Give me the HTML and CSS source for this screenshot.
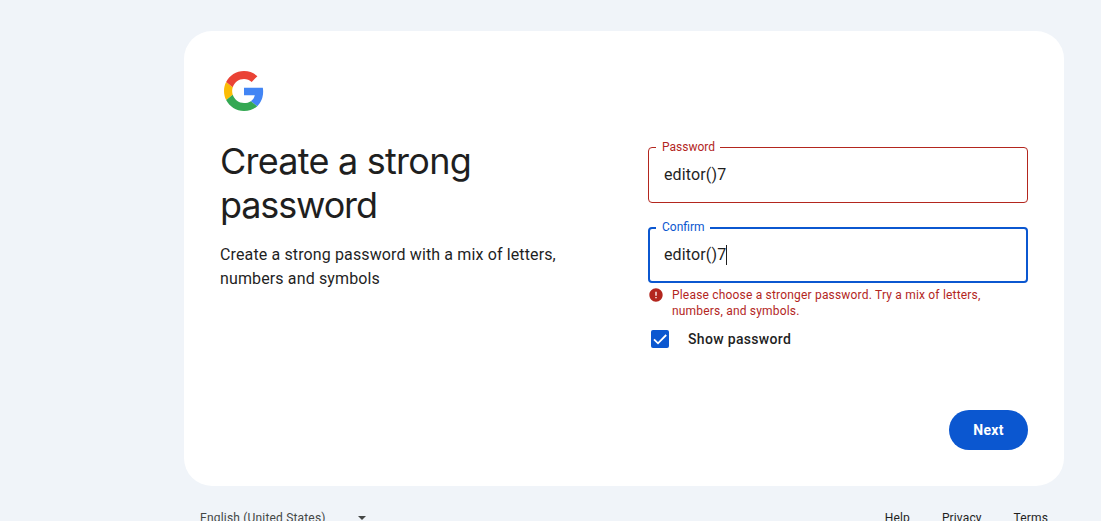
FILE: index.html
```html
<!DOCTYPE html>
<html lang="en">
<head>
<meta charset="utf-8">
<title>Create a strong password</title>
<link rel="stylesheet" href="styles.css">
</head>
<body>
<main class="card">
  <svg class="logo" viewBox="0 0 48 48" aria-label="Google">
    <path fill="#4285f4" d="M46.98 24.55c0-1.57-.15-3.09-.38-4.55H24v9.02h12.94c-.58 2.96-2.26 5.48-4.78 7.18l7.73 6c4.51-4.18 7.09-10.36 7.09-17.65z"/>
    <path fill="#fbbc05" d="M10.53 28.59c-.48-1.45-.76-2.99-.76-4.59s.27-3.14.76-4.59l-7.98-6.19C.92 16.46 0 20.12 0 24c0 3.88.92 7.54 2.56 10.78l7.97-6.19z"/>
    <path fill="#ea4335" d="M24 9.5c3.54 0 6.71 1.22 9.21 3.6l6.85-6.85C35.9 2.38 30.47 0 24 0 14.62 0 6.51 5.38 2.56 13.22l7.98 6.19C12.43 13.72 17.74 9.5 24 9.5z"/>
    <path fill="#34a853" d="M24 48c6.48 0 11.93-2.13 15.89-5.81l-7.73-6c-2.15 1.45-4.92 2.3-8.16 2.3-6.26 0-11.57-4.22-13.47-9.91l-7.98 6.19C6.51 42.62 14.62 48 24 48z"/>
  </svg>
  <div class="columns">
    <section class="intro">
      <h1 class="title">Create a strong<br><span class="title-end">password</span></h1>
      <p class="subtitle">Create a strong password with a mix of letters,<br>numbers and symbols</p>
    </section>
    <section class="form">
      <fieldset class="field field-error">
        <legend class="label">Password</legend>
        <span class="value">editor()7</span>
      </fieldset>
      <fieldset class="field field-focus">
        <legend class="label">Confirm</legend>
        <span class="value">editor()7</span><span class="caret"></span>
      </fieldset>
      <div class="error">
        <svg class="error-icon" viewBox="0 0 24 24"><path fill="currentColor" d="M12 2C6.48 2 2 6.48 2 12s4.48 10 10 10 10-4.48 10-10S17.52 2 12 2zm1 15h-2v-2h2v2zm0-4h-2V7h2v6z"/></svg>
        <p class="error-text">Please choose a stronger password. Try a mix of letters,<br>numbers, and symbols.</p>
      </div>
      <div class="show">
        <span class="checkbox"><svg viewBox="0 0 18 18"><path d="M3 9.4 7 13.3 15.2 5" fill="none" stroke="#fff" stroke-width="1.8"/></svg></span>
        <span class="show-label">Show password</span>
      </div>
      <button class="next">Next</button>
    </section>
  </div>
</main>
<footer class="footer">
  <div class="language"><span class="lang-name">English (United States)</span><span class="arrow"></span></div>
  <nav class="links"><span class="help">Help</span><span class="privacy">Privacy</span><span class="terms">Terms</span></nav>
</footer>
</body>
</html>
```

FILE: styles.css
```css
* { box-sizing: border-box; }
html { overflow: hidden; }
body {
  margin: 0;
  padding: 31px 0 0 184px;
  height: 521px;
  overflow: hidden;
  background: #f0f4f9;
  color: #1f1f1f;
  font-family: Roboto, "Noto Sans", sans-serif;
  white-space: nowrap;
}
.card {
  width: 880px;
  height: 455px;
  padding: 40px 36px 36px;
  border-radius: 28px;
  background: #fff;
}
.logo { display: block; width: 40px; height: 40px; margin-left: 4px; }
.columns { display: grid; grid-template-columns: 428px 380px; }
.intro { padding-top: 28px; }
.title {
  margin: 0;
  font: 400 36px/44px Inter, sans-serif;
  letter-spacing: -0.76px;
}
.title-end { letter-spacing: -1.15px; }
.subtitle { margin: 16px 0 0; font-size: 16px; line-height: 24px; letter-spacing: 0.13px; }
.form { display: flex; flex-direction: column; padding-top: 29px; }
.field {
  display: flex;
  width: 380px;
  height: 63px;
  min-width: 0;
  margin: 0;
  padding: 9px 14px 0 15px;
  border: 1px solid #b3261e;
  border-radius: 4px;
}
.label { margin-left: -8px; padding: 0 5px 0 6px; height: 14px; font-size: 12px; line-height: 14px; }
.field-error .label { color: #b3261e; }
.field-focus { margin-top: 17px; padding: 7px 14px 0; border: 2px solid #0b57d0; }
.field-focus .label { height: 16px; color: #0b57d0; }
.value { font-size: 16px; line-height: 24px; letter-spacing: 0.14px; }
.caret { width: 1px; height: 20px; margin-top: 2px; background: #1f1f1f; }
.error { display: flex; gap: 8px; margin-top: 4px; color: #b3261e; }
.error-icon { width: 16px; height: 16px; }
.error-text { margin: 0; font-size: 12px; line-height: 16px; letter-spacing: 0.19px; }
.show { display: flex; align-items: center; margin: 11px 0 0 3px; height: 18px; }
.checkbox { width: 18px; height: 18px; border-radius: 2px; background: #0b57d0; }
.checkbox svg { display: block; }
.show-label { margin-left: 19px; font-size: 14px; font-weight: 500; letter-spacing: 0.33px; }
.next {
  align-self: flex-end;
  width: 79px;
  height: 40px;
  margin-top: 62px;
  padding: 0;
  border: 0;
  border-radius: 20px;
  background: #0b57d0;
  color: #fff;
  font: 700 14px/20px Roboto, sans-serif;
  letter-spacing: 0.3px;
}
.footer {
  display: flex;
  justify-content: space-between;
  width: 880px;
  padding: 24px 16px 0;
  font-size: 12px;
  line-height: 16px;
  color: #444746;
}
.language { display: flex; align-items: center; }
.lang-name { width: 158px; letter-spacing: 0.18px; }
.arrow { border: 4px solid transparent; border-top-color: #444746; border-bottom: 0; }
.links { display: flex; gap: 32px; color: #1f1f1f; letter-spacing: 0.13px; }
```
